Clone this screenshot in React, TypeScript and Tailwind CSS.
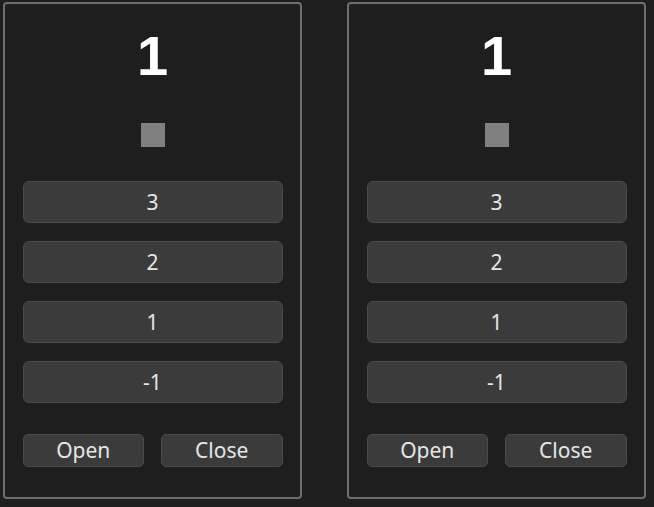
import React from "react";

function Panel() {
  const btn =
    "w-[260px] h-[42px] flex items-center justify-center rounded-[6px] bg-[#3b3b3b] border border-[#4b4b4b] text-[#e6e6e6] text-[21px] leading-none";
  const small =
    "flex-1 h-[33px] flex items-center justify-center rounded-[5px] bg-[#3b3b3b] border border-[#4b4b4b] text-[#e6e6e6] text-[21px] leading-none";
  return (
    <div className="w-[299px] h-[497px] shrink-0 border-2 border-[#6e6e6e] rounded-[4px] flex flex-col items-center">
      <div
        className="mt-[24px] h-[56px] text-[56px] leading-[56px] font-bold text-white"
        style={{ fontFamily: '"Liberation Sans", Arial, sans-serif' }}
      >
        1
      </div>
      <div className="mt-[39px] w-[24px] h-[24px] bg-[#808080]" />
      <div className="mt-[34px] flex flex-col gap-[18px]">
        {["3", "2", "1", "-1"].map((t) => (
          <div key={t} className={btn}>
            {t}
          </div>
        ))}
      </div>
      <div className="mt-[31px] w-[260px] flex gap-[17px]">
        <div className={small}>Open</div>
        <div className={small}>Close</div>
      </div>
    </div>
  );
}

export default function App() {
  return (
    <div
      className="w-[654px] h-[507px] bg-[#1e1e1e] flex gap-[45px] pl-[3px] pt-[2px]"
      style={{ fontFamily: '"Noto Sans", "Open Sans", sans-serif' }}
    >
      <Panel />
      <Panel />
    </div>
  );
}
